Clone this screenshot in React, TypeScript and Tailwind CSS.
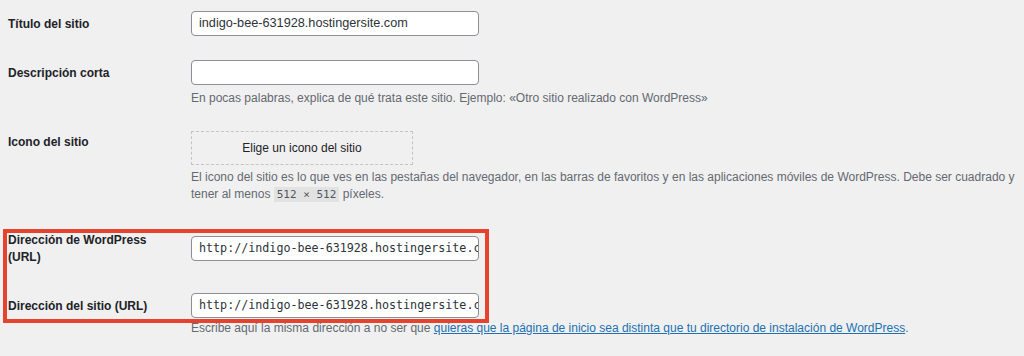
import React from "react";

const sans = "font-['Liberation_Sans',Arial,sans-serif]";
const mono = "font-['DejaVu_Sans_Mono','Liberation_Mono',monospace]";

export default function App() {
  return (
    <div className={`relative w-[1024px] h-[356px] bg-[#f0f0f1] ${sans} text-[12px] text-[#1d2327] overflow-hidden pt-[11px]`}>
      {/* Row 1 */}
      <div className="flex items-center">
        <div className="w-[191px] pl-[8px] font-bold leading-[17px] pt-[1px]">Título del sitio</div>
        <div className="w-[288px] h-[25px] bg-white border border-[#8c8f94] rounded-[4px] px-[7px] flex items-center text-[12.7px] text-[#2c3338]">
          indigo-bee-631928.hostingersite.com
        </div>
      </div>

      {/* Row 2 */}
      <div className="flex mt-[24px]">
        <div className="w-[191px] pl-[8px] font-bold leading-[17px] pt-[5px]">Descripción corta</div>
        <div>
          <div className="w-[288px] h-[25px] bg-white border border-[#8c8f94] rounded-[4px]" />
          <div className="mt-[5px] leading-[17px] text-[#646970]">
            En pocas palabras, explica de qué trata este sitio. Ejemplo: «Otro sitio realizado con WordPress»
          </div>
        </div>
      </div>

      {/* Row 3 */}
      <div className="flex mt-[24px]">
        <div className="w-[191px] pl-[8px] font-bold leading-[17px] pt-[3px]">Icono del sitio</div>
        <div className="flex-1 pr-[2px]">
          <div className="w-[222px] h-[34px] border border-dashed border-[#c3c4c7] flex items-center justify-center text-[#1d2327]">
            Elige un icono del sitio
          </div>
          <div className="mt-[4px] leading-[17px] text-[#646970]">
            El icono del sitio es lo que ves en las pestañas del navegador, en las barras de favoritos y en las aplicaciones móviles de WordPress. Debe ser cuadrado y tener al menos{" "}
            <code className={`${mono} bg-[#e2e2e2] px-[3px] py-[1px] text-[11px] text-[#50575e]`}>512 × 512</code>{" "}
            píxeles.
          </div>
        </div>
      </div>

      {/* Row 4 */}
      <div className="flex mt-[28px]">
        <div className="w-[191px] pl-[8px] font-bold leading-[17px] pt-[1px]">
          Dirección de WordPress
          <br />
          (URL)
        </div>
        <div className={`mt-[5px] w-[288px] h-[25px] bg-white border border-[#8c8f94] rounded-[4px] px-[7px] flex items-center overflow-hidden whitespace-nowrap ${mono} text-[11.7px] text-[#2c3338]`}>
          http://indigo-bee-631928.hostingersite.com
        </div>
      </div>

      {/* Row 5 */}
      <div className="flex items-center mt-[27px]">
        <div className="w-[191px] pl-[8px] font-bold leading-[17px] pt-[1px]">Dirección del sitio (URL)</div>
        <div className={`w-[288px] h-[25px] bg-white border border-[#8c8f94] rounded-[4px] px-[7px] flex items-center overflow-hidden whitespace-nowrap ${mono} text-[11.7px] text-[#2c3338]`}>
          http://indigo-bee-631928.hostingersite.com
        </div>
      </div>
      <div className="pl-[191px] mt-[2px] leading-[17px] text-[#646970]">
        Escribe aquí la misma dirección a no ser que{" "}
        <a className="text-[#2271b1] underline">quieras que la página de inicio sea distinta que tu directorio de instalación de WordPress</a>.
      </div>

      {/* Annotation */}
      <div className="absolute left-[3px] top-[229px] w-[486px] h-[94px] border-[4px] border-[#e5432d] pointer-events-none" />
    </div>
  );
}
